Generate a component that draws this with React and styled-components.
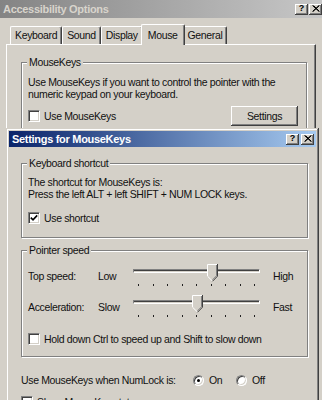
import React from 'react';
import styled, { createGlobalStyle } from 'styled-components';

const GlobalStyle = createGlobalStyle`
  html, body { margin: 0; padding: 0; background: #d4d0c8; overflow: hidden; }
  body {
    font-family: "Liberation Sans", Arial, sans-serif;
    font-size: 10.5px;
    letter-spacing: -0.35px;
    color: #111;
  }
  * { box-sizing: border-box; }
`;

const Screen = styled.div`
  position: relative;
  width: 322px;
  height: 400px;
  overflow: hidden;
  background: #d4d0c8;
`;

const Window = styled.div`
  width: 326px;
  display: flex;
  flex-direction: column;
`;

const TitleBar = styled.div`
  display: flex;
  align-items: center;
  justify-content: space-between;
  height: 16px;
  padding: 0 ${p => p.$pr}px 0 ${p => p.$pl}px;
  background: linear-gradient(to right, ${p => p.$from}, ${p => p.$to});
`;

const OuterTitleBar = styled(TitleBar)`
  height: 18px;
`;

const TitleText = styled.span`
  font-weight: bold;
  font-size: 11px;
  letter-spacing: -0.3px;
  color: ${p => p.$color};
  white-space: nowrap;
`;

const CaptionButtons = styled.div`
  display: flex;
  gap: ${p => p.$gap}px;
`;

const CaptionButton = styled.div`
  width: 13px;
  height: 11px;
  background: #d4d0c8;
  box-shadow: inset -1px -1px #404040, inset 1px 1px #fff, inset -2px -2px #808080;
  display: flex;
  align-items: center;
  justify-content: center;
  font-weight: bold;
  font-size: 9px;
  line-height: 9px;
  letter-spacing: 0;
  color: #000;
  padding-bottom: 1px;
`;

const Body = styled.div`
  padding: 5px 0 0 6px;
`;

const TabStrip = styled.div`
  display: flex;
  align-items: flex-end;
  height: 21px;
  padding-left: 4px;
  position: relative;
  z-index: 1;
`;

const Tab = styled.div`
  height: ${p => (p.$active ? 21 : 18)}px;
  margin: 0 ${p => (p.$active ? -2 : 0)}px ${p => (p.$active ? -1 : 0)}px;
  padding: ${p => (p.$active ? 3 : 1)}px ${p => (p.$active ? 6 : 4)}px 0;
  line-height: 14px;
  background: #d4d0c8;
  border-top: 1px solid #fff;
  border-left: 1px solid #fff;
  border-right: 1px solid #404040;
  box-shadow: inset -1px 0 #808080;
  border-radius: 2px 2px 0 0;
  position: relative;
  z-index: ${p => (p.$active ? 2 : 1)};
  white-space: nowrap;
`;

const TabPanel = styled.div`
  width: 310px;
  height: 360px;
  border: 1px solid;
  border-color: #fff #404040 #404040 #fff;
  box-shadow: inset -1px -1px #808080;
  padding: 0 8px 0 14px;
`;

const GroupBox = styled.fieldset`
  margin: ${p => p.$mt}px 0 0;
  padding: ${p => p.$pt}px 8px ${p => p.$pb}px 6px;
  border: 1px solid #808080;
  box-shadow: 1px 1px 0 #fff, inset 1px 1px 0 #fff;
  min-width: 0;
`;

const Legend = styled.legend`
  padding: 0 2px;
  margin-left: -1px;
  line-height: 12px;
  background: #d4d0c8;
`;

const Text = styled.p`
  margin: 0;
  line-height: 12px;
  white-space: nowrap;
`;

const Row = styled.div`
  display: flex;
  align-items: center;
  justify-content: space-between;
  margin-top: ${p => p.$mt}px;
`;

const CheckLabel = styled.label`
  display: flex;
  align-items: center;
  gap: 4px;
  line-height: 12px;
  margin-top: ${p => p.$mt || 0}px;
  white-space: nowrap;
`;

const Box = styled.span`
  width: 12px;
  height: 12px;
  flex: none;
  background: #fff;
  border: 1px solid;
  border-color: #808080 #fff #fff #808080;
  box-shadow: inset 1px 1px #404040, inset -1px -1px #d4d0c8;
  display: flex;
  align-items: center;
  justify-content: center;
`;

const PushButton = styled.button`
  width: 67px;
  height: 20px;
  padding: 0;
  border: none;
  background: #d4d0c8;
  font: inherit;
  letter-spacing: inherit;
  color: inherit;
  box-shadow: inset -1px -1px #404040, inset 1px 1px #fff, inset -2px -2px #808080;
`;

const Dialog = styled.div`
  position: absolute;
  top: 128px;
  left: 6px;
  width: 313px;
  height: 300px;
  padding: 3px;
  background: #d4d0c8;
  box-shadow: inset -1px -1px #404040, inset 1px 1px #d4d0c8, inset -2px -2px #808080, inset 2px 2px #fff;
`;

const DialogBody = styled.div`
  padding: 0 8px 0 12px;
`;

const SliderRow = styled.div`
  display: grid;
  grid-template-columns: 70px 35px 140px auto;
  align-items: start;
  margin-top: ${p => p.$mt}px;
  height: 24px;
`;

const SliderLabel = styled.span`
  margin-top: 6px;
  line-height: 12px;
  white-space: nowrap;
`;

const SliderBox = styled.div`
  position: relative;
  width: 127px;
  height: 24px;
  padding-top: 5px;
`;

const Track = styled.div`
  height: 4px;
  background: #d4d0c8;
  border: 1px solid;
  border-color: #808080 #fff #fff #808080;
  box-shadow: inset 0 1px #404040;
`;

const Ticks = styled.div`
  display: flex;
  justify-content: space-between;
  padding: 0 5px;
  margin-top: 11px;
`;

const Tick = styled.span`
  width: 1px;
  height: 2px;
  background: #202020;
`;

const ThumbWrap = styled.svg`
  position: absolute;
  top: 0;
`;

const RadioRow = styled.div`
  display: flex;
  align-items: center;
  margin-top: 17px;
  line-height: 12px;
  white-space: nowrap;
`;

const RadioPrompt = styled.span`
  width: 172px;
  flex: none;
`;

const RadioOption = styled.label`
  display: flex;
  align-items: center;
  gap: 5px;
  width: 43px;
  flex: none;
`;

const Circle = styled.span`
  width: 11px;
  height: 11px;
  flex: none;
  border-radius: 50%;
  background: #fff;
  border: 1px solid;
  border-color: #808080 #fff #fff #808080;
  box-shadow: inset 1px 1px #404040, inset -1px -1px #d4d0c8;
  display: flex;
  align-items: center;
  justify-content: center;
`;

const Dot = styled.span`
  width: 3px;
  height: 3px;
  border-radius: 50%;
  background: #000;
`;

const CloseGlyph = () => (
  <svg width="8" height="7" viewBox="0 0 8 7">
    <path d="M0.5 0.5 L7 6.5 M1.5 0.5 L7.5 6.5 M7 0.5 L0.5 6.5 M7.5 0.5 L1 6.5" stroke="#000" strokeWidth="1" fill="none" />
  </svg>
);

const Caption = () => (
  <>
    <CaptionButton>?</CaptionButton>
    <CaptionButton><CloseGlyph /></CaptionButton>
  </>
);

const Check = ({ checked, children, mt }) => (
  <CheckLabel $mt={mt}>
    <Box>
      {checked && (
        <svg width="8" height="8" viewBox="0 0 8 8">
          <path d="M0.8 3.6 L3 5.8 L7.2 1.4" stroke="#000" strokeWidth="1.6" fill="none" />
        </svg>
      )}
    </Box>
    <span>{children}</span>
  </CheckLabel>
);

const Thumb = ({ value }) => (
  <ThumbWrap width="11" height="18" viewBox="0 0 11 18" style={{ left: 5 + value * 14.875 - 5.5 }}>
    <polygon points="0,0 11,0 11,12 5.5,17.5 0,12" fill="#d4d0c8" />
    <polyline points="0.5,12 0.5,0.5 10,0.5" stroke="#fff" fill="none" />
    <polyline points="0.5,12.2 5.2,16.8" stroke="#fff" fill="none" />
    <polyline points="10.5,0 10.5,12.2 5.5,17.3" stroke="#404040" fill="none" />
    <polyline points="9.5,1 9.5,11.8 5.5,15.8" stroke="#808080" fill="none" />
  </ThumbWrap>
);

const Slider = ({ label, min, max, value, mt }) => (
  <SliderRow $mt={mt}>
    <SliderLabel>{label}</SliderLabel>
    <SliderLabel>{min}</SliderLabel>
    <SliderBox>
      <Track />
      <Ticks>
        {Array.from({ length: 9 }, (_, i) => <Tick key={i} />)}
      </Ticks>
      <Thumb value={value} />
    </SliderBox>
    <SliderLabel>{max}</SliderLabel>
  </SliderRow>
);

const Radio = ({ checked, children }) => (
  <RadioOption>
    <Circle>{checked && <Dot />}</Circle>
    <span>{children}</span>
  </RadioOption>
);

const tabs = ['Keyboard', 'Sound', 'Display', 'Mouse', 'General'];

export default function App() {
  return (
    <Screen>
      <GlobalStyle />
      <Window>
        <OuterTitleBar $from="#848484" $to="#c8c8c8" $pl={3} $pr={4}>
          <TitleText $color="#d8d4cc">Accessibility Options</TitleText>
          <CaptionButtons $gap={1}><Caption /></CaptionButtons>
        </OuterTitleBar>
        <Body>
          <TabStrip>
            {tabs.map(t => (
              <Tab key={t} $active={t === 'Mouse'}>{t}</Tab>
            ))}
          </TabStrip>
          <TabPanel>
            <GroupBox $mt={11} $pt={8} $pb={10}>
              <Legend>MouseKeys</Legend>
              <Text>Use MouseKeys if you want to control the pointer with the</Text>
              <Text>numeric keypad on your keyboard.</Text>
              <Row $mt={6}>
                <Check>Use MouseKeys</Check>
                <PushButton>Settings</PushButton>
              </Row>
            </GroupBox>
          </TabPanel>
        </Body>
      </Window>

      <Dialog>
        <TitleBar $from="#0a246a" $to="#a6caf0" $pl={3} $pr={2}>
          <TitleText $color="#fff">Settings for MouseKeys</TitleText>
          <CaptionButtons $gap={2}><Caption /></CaptionButtons>
        </TitleBar>
        <DialogBody>
          <GroupBox $mt={10} $pt={7} $pb={13}>
            <Legend>Keyboard shortcut</Legend>
            <Text>The shortcut for MouseKeys is:</Text>
            <Text>Press the left ALT + left SHIFT + NUM LOCK keys.</Text>
            <Check checked mt={12}>Use shortcut</Check>
          </GroupBox>
          <GroupBox $mt={6} $pt={8} $pb={11}>
            <Legend>Pointer speed</Legend>
            <Slider label="Top speed:" min="Low" max="High" value={5} mt={0} />
            <Slider label="Acceleration:" min="Slow" max="Fast" value={4} mt={7} />
            <Check mt={14}>Hold down Ctrl to speed up and Shift to slow down</Check>
          </GroupBox>
          <RadioRow>
            <RadioPrompt>Use MouseKeys when NumLock is:</RadioPrompt>
            <Radio checked>On</Radio>
            <Radio>Off</Radio>
          </RadioRow>
          <Check mt={10}>Show MouseKey status on screen</Check>
        </DialogBody>
      </Dialog>
    </Screen>
  );
}
